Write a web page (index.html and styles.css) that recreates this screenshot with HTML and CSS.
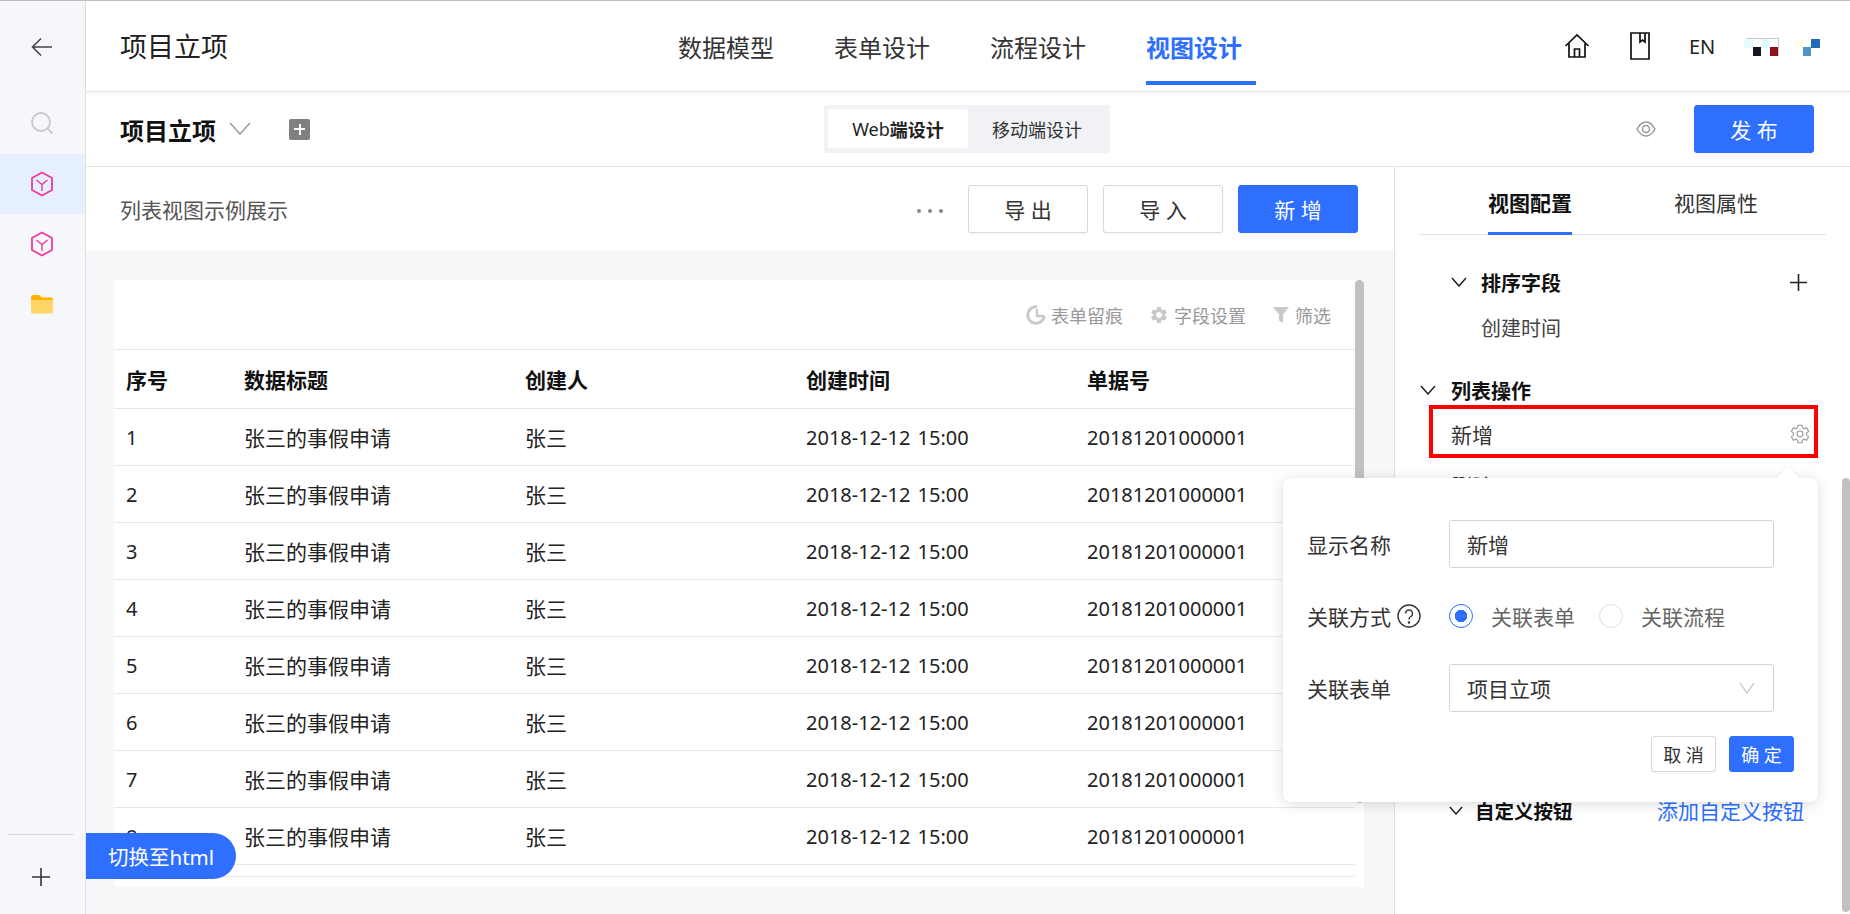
FILE: index.html
```html
<!DOCTYPE html>
<html lang="zh-CN">
<head>
    <meta charset="UTF-8">
    <meta name="viewport" content="width=device-width, initial-scale=1.0">
    <title>项目立项 - 视图设计</title>
    <link rel="stylesheet" href="styles.css">
</head>
<body>
    <aside class="sidebar">
        <a class="side-item back" href="#">
            <svg width="24" height="24" viewBox="0 0 24 24" fill="none" stroke="#444" stroke-width="1.6"><path d="M22 12H2.500M11 3.500 2.500 12l8.500 8.500"/></svg>
        </a>
        <a class="side-item search" href="#">
            <svg width="24" height="24" viewBox="0 0 24 24" fill="none" stroke="#c9c9c9" stroke-width="1.8"><circle cx="11" cy="11" r="9"/><path d="m17.500 17.500 5 5"/></svg>
        </a>
        <a class="side-item active" href="#">
            <svg width="24" height="26" viewBox="0 0 24 26" fill="none" stroke="#ee3a9e" stroke-width="1.8"><path d="M12 1.500 22 7v12l-10 5.500L2 19V7z"/><path d="m6.500 9 5.500 4.500L17.500 9M12 13.500V20" stroke-width="1.4"/></svg>
        </a>
        <a class="side-item" href="#">
            <svg width="24" height="26" viewBox="0 0 24 26" fill="none" stroke="#ee3a9e" stroke-width="1.8"><path d="M12 1.500 22 7v12l-10 5.500L2 19V7z"/><path d="m6.500 9 5.500 4.500L17.500 9M12 13.500V20" stroke-width="1.4"/></svg>
        </a>
        <a class="side-item" href="#">
            <svg width="24" height="20" viewBox="0 0 24 20"><path d="M1 3a2 2 0 0 1 2-2h6l3 2.500h9a2 2 0 0 1 2 2V8H1z" fill="#ffb300"/><path d="M1 6h22v12a1.500 1.500 0 0 1-1.500 1.500h-19A1.500 1.500 0 0 1 1 18z" fill="#ffd666"/></svg>
        </a>
        <div class="side-bottom">
            <svg width="18" height="18" viewBox="0 0 18 18" fill="none" stroke="#333" stroke-width="1.6"><path d="M9 0v18M0 9h18"/></svg>
        </div>
    </aside>

    <div class="main">
        <header class="topbar">
            <div class="app-title">项目立项</div>
            <nav class="steps">
                <a href="#">数据模型</a>
                <a href="#">表单设计</a>
                <a href="#">流程设计</a>
                <a href="#" class="current">视图设计</a>
            </nav>
            <div class="top-tools">
                <svg class="home-icon" width="26" height="26" viewBox="0 0 26 26" fill="none" stroke="#111" stroke-width="1.7"><path d="M1.500 13 13 2l11.500 11M5 10.500V24h16V10.500M10.500 24v-8h5v8"/></svg>
                <svg class="book-icon" width="20" height="28" viewBox="0 0 20 28" fill="none" stroke="#111" stroke-width="1.7"><path d="M1 1h18v26H1zM10 1v9l2.500-2 2.500 2V1"/></svg>
                <span class="lang">EN</span>
                <svg class="mosaic" width="76" height="20" viewBox="0 0 76 20">
                    <rect x="0" y="1" width="9" height="9" fill="#e2fbfb"/>
                    <rect x="18" y="1" width="8" height="9" fill="#e2fbfb"/>
                    <rect x="2" y="0" width="32" height="1" fill="#c8c8c8"/>
                    <rect x="34" y="0" width="1" height="18" fill="#c8c8c8"/>
                    <rect x="9" y="9" width="8" height="9" fill="#14171f"/>
                    <rect x="26" y="9" width="8" height="9" fill="#8e1219"/>
                    <rect x="51" y="1" width="8" height="9" fill="#fffde6"/>
                    <rect x="59" y="9" width="8" height="9" fill="#4f95c6"/>
                    <rect x="67" y="1" width="9" height="9" fill="#2468b8"/>
                </svg>
            </div>
        </header>

        <div class="subbar">
            <div class="view-name">
                <strong>项目立项</strong>
                <svg width="22" height="14" viewBox="0 0 22 14" fill="none" stroke="#8a8f99" stroke-width="1.2"><path d="m1 1 10 11L21 1"/></svg>
                <span class="add-box"></span>
            </div>
            <div class="segment">
                <span class="on">Web<b>端设计</b></span>
                <span>移动端设计</span>
            </div>
            <div class="publish">
                <svg width="20" height="16" viewBox="0 0 20 16" fill="none" stroke="#999" stroke-width="1.5"><path d="M1 8c2.500-4.500 5.500-7 9-7s6.500 2.500 9 7c-2.500 4.500-5.500 7-9 7s-6.500-2.500-9-7z"/><circle cx="10" cy="8" r="3.500"/></svg>
                <button class="btn primary">发 布</button>
            </div>
        </div>

        <div class="workspace">
            <section class="preview">
                <div class="list-head">
                    <span class="list-title">列表视图示例展示</span>
                    <div class="list-actions">
                        <span class="dots"><i></i><i></i><i></i></span>
                        <button class="btn">导 出</button>
                        <button class="btn">导 入</button>
                        <button class="btn primary">新 增</button>
                    </div>
                </div>
                <div class="list-body">
                    <div class="card">
                        <div class="card-inner">
                            <div class="table-tools">
                                <span class="tool">
                                    <svg width="20" height="20" viewBox="0 0 20 20" fill="none" stroke="#c9c9c9"><path d="M11 1.800A8.300 8.300 0 1 0 18.300 11" stroke-width="3"/><path d="M11 4v7h7" stroke-width="2.400"/></svg>
                                    表单留痕
                                </span>
                                <span class="tool">
                                    <svg width="20" height="20" viewBox="0 0 24 24" fill="#c9c9c9"><path d="M19.140 12.940c.04-.3.06-.61.06-.94 0-.32-.02-.64-.07-.94l2.030-1.580c.18-.14.23-.41.12-.61l-1.920-3.320c-.12-.22-.37-.29-.59-.22l-2.390.96c-.5-.38-1.030-.7-1.620-.94l-.36-2.540c-.04-.24-.24-.41-.48-.41h-3.840c-.24 0-.43.17-.47.41l-.36 2.540c-.59.24-1.130.57-1.620.94l-2.390-.96c-.22-.08-.47 0-.59.22L2.740 8.870c-.12.21-.08.47.12.61l2.030 1.580c-.05.3-.09.63-.09.94s.02.64.07.94l-2.030 1.580c-.18.14-.23.41-.12.61l1.920 3.320c.12.22.37.29.59.22l2.390-.96c.5.38 1.030.7 1.620.94l.36 2.540c.05.24.24.41.48.41h3.840c.24 0 .44-.17.47-.41l.36-2.540c.59-.24 1.130-.56 1.620-.94l2.390.96c.22.08.47 0 .59-.22l1.920-3.320c.12-.22.07-.47-.12-.61l-2.010-1.580zM12 15.600c-1.980 0-3.600-1.620-3.600-3.600s1.620-3.600 3.600-3.600 3.600 1.620 3.600 3.600-1.620 3.600-3.600 3.600z"/></svg>
                                    字段设置
                                </span>
                                <span class="tool">
                                    <svg width="18" height="18" viewBox="0 0 18 18" fill="#c9c9c9"><path d="M1 1h16l-6 7.500V17l-4-2.500V8.500z"/></svg>
                                    筛选
                                </span>
                            </div>
                            <table class="data-table">
                                <thead>
                                    <tr><th class="c-no">序号</th><th class="c-title">数据标题</th><th class="c-user">创建人</th><th class="c-time">创建时间</th><th>单据号</th></tr>
                                </thead>
                                <tbody>
                                    <tr><td class="num">1</td><td>张三的事假申请</td><td>张三</td><td class="num date">2018-12-12 15:00</td><td class="num">20181201000001</td></tr>
                                    <tr><td class="num">2</td><td>张三的事假申请</td><td>张三</td><td class="num date">2018-12-12 15:00</td><td class="num">20181201000001</td></tr>
                                    <tr><td class="num">3</td><td>张三的事假申请</td><td>张三</td><td class="num date">2018-12-12 15:00</td><td class="num">20181201000001</td></tr>
                                    <tr><td class="num">4</td><td>张三的事假申请</td><td>张三</td><td class="num date">2018-12-12 15:00</td><td class="num">20181201000001</td></tr>
                                    <tr><td class="num">5</td><td>张三的事假申请</td><td>张三</td><td class="num date">2018-12-12 15:00</td><td class="num">20181201000001</td></tr>
                                    <tr><td class="num">6</td><td>张三的事假申请</td><td>张三</td><td class="num date">2018-12-12 15:00</td><td class="num">20181201000001</td></tr>
                                    <tr><td class="num">7</td><td>张三的事假申请</td><td>张三</td><td class="num date">2018-12-12 15:00</td><td class="num">20181201000001</td></tr>
                                    <tr><td class="num">8</td><td>张三的事假申请</td><td>张三</td><td class="num date">2018-12-12 15:00</td><td class="num">20181201000001</td></tr>
                                    <tr class="tail"><td colspan="5"></td></tr>
                                </tbody>
                            </table>
                        </div>
                        <div class="card-scroll"></div>
                    </div>
                </div>
            </section>

            <aside class="config">
                <div class="config-tabs">
                    <a href="#" class="on">视图配置</a>
                    <a href="#">视图属性</a>
                </div>
                <div class="group sort-group">
                    <div class="group-head">
                        <svg class="chev" width="16" height="10" viewBox="0 0 16 10" fill="none" stroke="#222" stroke-width="1.5"><path d="m1 1 7 8 7-8"/></svg>
                        <strong>排序字段</strong>
                        <svg class="group-add" width="17" height="17" viewBox="0 0 16 16" fill="none" stroke="#222" stroke-width="1.500"><path d="M8 0v16M0 8h16"/></svg>
                    </div>
                    <div class="group-text">创建时间</div>
                </div>
                <div class="group op-group">
                    <div class="group-head">
                        <svg class="chev" width="16" height="10" viewBox="0 0 16 10" fill="none" stroke="#222" stroke-width="1.5"><path d="m1 1 7 8 7-8"/></svg>
                        <strong>列表操作</strong>
                    </div>
                    <div class="op-row picked">
                        <span>新增</span>
                        <svg width="22" height="22" viewBox="0 0 24 24" fill="none" stroke="#999" stroke-width="1.2"><path d="M19.140 12.940c.04-.3.06-.61.06-.94 0-.32-.02-.64-.07-.94l2.030-1.580c.18-.14.23-.41.12-.61l-1.920-3.320c-.12-.22-.37-.29-.59-.22l-2.390.96c-.5-.38-1.030-.7-1.620-.94l-.36-2.540c-.04-.24-.24-.41-.48-.41h-3.840c-.24 0-.43.17-.47.41l-.36 2.540c-.59.24-1.130.57-1.620.94l-2.390-.96c-.22-.08-.47 0-.59.22L2.740 8.870c-.12.21-.08.47.12.61l2.030 1.580c-.05.3-.09.63-.09.94s.02.64.07.94l-2.030 1.580c-.18.14-.23.41-.12.61l1.920 3.320c.12.22.37.29.59.22l2.390-.96c.5.38 1.030.7 1.620.94l.36 2.540c.05.24.24.41.48.41h3.840c.24 0 .44-.17.47-.41l.36-2.540c.59-.24 1.130-.56 1.620-.94l2.390.96c.22.08.47 0 .59-.22l1.920-3.320c.12-.22.07-.47-.12-.61l-2.010-1.580z"/><circle cx="12" cy="12" r="3.200"/></svg>
                    </div>
                    <div class="op-row">
                        <span>删除</span>
                    </div>
                </div>
                <div class="group custom-group">
                    <div class="group-head">
                        <svg class="chev" width="14" height="9" viewBox="0 0 16 10" fill="none" stroke="#222" stroke-width="1.6"><path d="m1 1 7 8 7-8"/></svg>
                        <strong>自定义按钮</strong>
                        <a href="#" class="add-link">添加自定义按钮</a>
                    </div>
                </div>
                <div class="config-scroll"></div>

                <div class="popover">
                    <div class="pop-row">
                        <label>显示名称</label>
                        <div class="field">新增</div>
                    </div>
                    <div class="pop-row">
                        <label>关联方式
                            <svg width="24" height="24" viewBox="0 0 24 24" fill="none" stroke="#333" stroke-width="1.400"><circle cx="12" cy="12" r="11"/><path d="M8.500 9.500a3.500 3.500 0 1 1 5.300 3c-1.300.8-1.800 1.500-1.800 3"/><circle cx="12" cy="18.500" r=".6" fill="#333"/></svg>
                        </label>
                        <div class="radios">
                            <span class="radio checked"><i></i>关联表单</span>
                            <span class="radio"><i></i>关联流程</span>
                        </div>
                    </div>
                    <div class="pop-row">
                        <label>关联表单</label>
                        <div class="field select">
                            项目立项
                            <svg width="16" height="12" viewBox="0 0 16 12" fill="none" stroke="#c4c4c4" stroke-width="1.300"><path d="m1 1 7 10 7-10"/></svg>
                        </div>
                    </div>
                    <div class="pop-actions">
                        <button class="btn small">取 消</button>
                        <button class="btn small primary">确 定</button>
                    </div>
                </div>
            </aside>
        </div>
    </div>

    <button class="switch-html">切换至html</button>
</body>
</html>
```

FILE: styles.css
```css
* {
    box-sizing: border-box;
}
html, body {
    height: 100%;
}
body {
    margin: 0;
    display: flex;
    height: 914px;
    overflow: hidden;
    border-top: 1px solid #bdbdbd;
    font-family: "Noto Sans", "Noto Sans CJK SC", sans-serif;
    font-size: 21px;
    color: #222;
    background-color: #fff;
}
a {
    color: inherit;
    text-decoration: none;
}
button {
    font-family: inherit;
}

/* left rail */
.sidebar {
    width: 86px;
    flex: none;
    display: flex;
    flex-direction: column;
    background-color: #f6f7fa;
    border-right: 1px solid #e0e0e0;
    position: relative;
}
.side-item {
    height: 60px;
    display: flex;
    align-items: center;
    justify-content: center;
    padding-right: 1px;
}
.side-item.back {
    height: 91px;
}
.side-item.search {
    height: 62px;
}
.side-item.active {
    background-color: #e6efff;
}
.side-bottom {
    margin: auto 11px 0 8px;
    height: 80px;
    border-top: 1px solid #d9d9d9;
    display: flex;
    align-items: center;
    justify-content: center;
    padding-top: 4px;
}

.main {
    flex: 1;
    min-width: 0;
    display: flex;
    flex-direction: column;
}

/* top bar */
.topbar {
    height: 91px;
    flex: none;
    display: flex;
    align-items: center;
    padding-left: 34px;
    border-bottom: 1px solid #e4e4e4;
    box-shadow: 0 2px 6px rgba(0,0,0,0.05);
    position: relative;
}
.app-title {
    font-size: 27px;
    line-height: 40px;
    padding-top: 2px;
    width: 558px;
    flex: none;
    color: #222;
}
.steps {
    display: flex;
    gap: 60px;
    height: 100%;
    font-size: 24px;
}
.steps a {
    display: flex;
    align-items: center;
    position: relative;
    width: 96px;
    color: #333;
}
.steps .current {
    color: #2e6fff;
    font-weight: bold;
}
.steps .current::after {
    content: "";
    position: absolute;
    left: 0;
    bottom: 6px;
    width: 110px;
    height: 4px;
    background-color: #2e6fff;
}
.top-tools {
    margin-left: auto;
    display: flex;
    align-items: center;
    padding-right: 30px;
}
.book-icon {
    margin-left: 40px;
}
.lang {
    margin-left: 39px;
    font-size: 20px;
    width: 26px;
}
.mosaic {
    margin-left: 29px;
    margin-top: 4px;
}

/* view name bar */
.subbar {
    height: 75px;
    flex: none;
    display: flex;
    align-items: center;
    padding: 0 36px 0 34px;
    border-bottom: 1px solid #e4e4e4;
}
.view-name {
    width: 704px;
    flex: none;
    display: flex;
    align-items: center;
}
.view-name strong {
    font-size: 24px;
    color: #111;
}
.view-name svg {
    margin-left: 13px;
}
.add-box {
    width: 21px;
    height: 21px;
    margin-left: 38px;
    border-radius: 2px;
    background-color: #808080;
    position: relative;
}
.add-box::before, .add-box::after {
    content: "";
    position: absolute;
    background-color: #fff;
}
.add-box::before {
    left: 5px;
    top: 9.500px;
    width: 11px;
    height: 2px;
}
.add-box::after {
    left: 9.500px;
    top: 5px;
    width: 2px;
    height: 11px;
}
.segment {
    width: 286px;
    height: 48px;
    flex: none;
    display: flex;
    padding: 4px;
    border-radius: 3px;
    background-color: #f0f2f5;
    font-size: 18px;
    color: #333;
}
.segment span {
    flex: 1;
    display: flex;
    align-items: center;
    justify-content: center;
}
.segment .on {
    flex: none;
    width: 140px;
    height: 39px;
    background-color: #fff;
    color: #222;
}
.publish {
    margin-left: auto;
    display: flex;
    align-items: center;
    gap: 38px;
}
.btn {
    width: 120px;
    height: 48px;
    padding: 0;
    background-color: #fff;
    border: 1px solid #d9d9d9;
    border-radius: 3px;
    font-size: 21px;
    color: #333;
    box-shadow: 0 2px 2px rgba(0,0,0,0.03);
}
.btn.primary {
    background-color: #2e6fff;
    border-color: #2e6fff;
    color: #fff;
}
.btn.small {
    width: 65px;
    height: 36px;
    font-size: 18px;
}

.workspace {
    flex: 1;
    min-height: 0;
    display: flex;
}

/* list preview */
.preview {
    flex: 1;
    min-width: 0;
    display: flex;
    flex-direction: column;
    background-color: #f6f7f9;
}
.list-head {
    height: 83px;
    flex: none;
    display: flex;
    align-items: center;
    padding: 0 36px 0 34px;
    background-color: #fff;
}
.list-title {
    color: #555;
}
.list-actions {
    margin-left: auto;
    display: flex;
    align-items: center;
    gap: 15px;
}
.dots {
    display: flex;
    gap: 7px;
    margin-right: 10px;
    margin-top: 4px;
}
.dots i {
    width: 4px;
    height: 4px;
    border-radius: 50%;
    background-color: #888;
}
.list-body {
    flex: 1;
    padding: 30px 30px 27px 28px;
    min-height: 0;
}
.card {
    display: flex;
    height: 607px;
    background-color: #fff;
}
.card-inner {
    flex: 1;
    min-width: 0;
}
.card-scroll {
    width: 9px;
    height: 523px;
    flex: none;
    border-radius: 5px;
    background-color: #c1c1c1;
}
.table-tools {
    height: 69px;
    display: flex;
    align-items: center;
    justify-content: flex-end;
    gap: 26px;
    padding-right: 24px;
    font-size: 18px;
    color: #999;
}
.tool {
    display: flex;
    align-items: center;
    gap: 5px;
}
.data-table {
    width: 100%;
    table-layout: fixed;
    border-collapse: collapse;
}
.data-table th, .data-table td {
    height: 57px;
    padding: 2px 0 0 12px;
    text-align: left;
    border-top: 1px solid #e8e8e8;
    font-size: 21px;
    line-height: 28px;
    font-weight: normal;
    color: #222;
}
.data-table th {
    height: 59px;
    font-weight: bold;
    color: #111;
}
.data-table .num {
    font-size: 20px;
}
.data-table .date {
    word-spacing: 2px;
}
.data-table .tail td {
    height: 12px;
    padding: 0;
    line-height: 0;
    border-bottom: 1px solid #e8e8e8;
}
.c-no {
    width: 118px;
}
.c-title, .c-user, .c-time {
    width: 281px;
}

/* right config panel */
.config {
    width: 456px;
    flex: none;
    border-left: 1px solid #e0e0e0;
    background-color: #fff;
    position: relative;
}
.config-tabs {
    margin: 0 24px;
    height: 68px;
    display: flex;
    border-bottom: 1px solid #e4e4e4;
    padding-left: 69px;
    gap: 102px;
}
.config-tabs a {
    width: 84px;
    height: 68px;
    line-height: 72px;
    white-space: nowrap;
    color: #333;
}
.config-tabs .on {
    font-weight: bold;
    color: #111;
    border-bottom: 3px solid #2e6fff;
}
.group-head {
    display: flex;
    align-items: center;
    height: 30px;
}
.group-head strong {
    font-size: 20px;
    color: #111;
}
.chev {
    flex: none;
}
.sort-group {
    padding: 32px 48px 0 56px;
}
.sort-group .chev {
    margin-right: 14px;
}
.group-add {
    margin-left: auto;
    margin-right: -5px;
}
.group-text {
    margin: 17px 0 0 30px;
    line-height: 30px;
    font-size: 20px;
    color: #444;
}
.op-group {
    padding: 31px 32px 0 34px;
}
.op-group .group-head {
    height: 30px;
    margin-left: -1px;
}
.op-group .group-head .chev {
    margin-left: -8px;
    margin-right: 15px;
}
.op-row {
    height: 53px;
    display: flex;
    align-items: center;
    justify-content: space-between;
    padding: 0 4px 0 22px;
    font-size: 21px;
    color: #333;
}
.op-row.picked {
    border: 4px solid #f00;
    padding: 5px 3px 0 18px;
}
.custom-group {
    padding: 284px 46px 0 53px;
}
.custom-group .chev {
    margin-right: 12px;
    margin-left: 1px;
}
.custom-group strong {
    font-size: 19.500px;
}
.add-link {
    margin-left: auto;
    font-size: 21px;
    color: #2e6fff;
}
.config-scroll {
    position: absolute;
    right: 0;
    top: 311px;
    width: 8px;
    height: 434px;
    border-radius: 4px;
    background-color: #c1c1c1;
}

/* popover over the panel */
.popover {
    position: absolute;
    left: -112px;
    top: 311px;
    width: 535px;
    height: 324px;
    padding: 42px 44px 0 24px;
    background-color: #fff;
    border-radius: 8px;
    box-shadow: 0 2px 14px rgba(0,0,0,0.14);
}
.popover::before {
    content: "";
    position: absolute;
    right: 22px;
    top: -8px;
    width: 16px;
    height: 16px;
    background-color: #fff;
    transform: rotate(45deg);
    box-shadow: -2px -2px 4px rgba(0,0,0,0.03);
}
.pop-row {
    display: flex;
    align-items: center;
    height: 48px;
    margin-bottom: 24px;
    position: relative;
}
.pop-row label {
    width: 142px;
    flex: none;
    display: flex;
    align-items: center;
    gap: 6px;
    font-size: 21px;
    color: #333;
}
.field {
    flex: 1;
    height: 48px;
    display: flex;
    align-items: center;
    justify-content: space-between;
    padding: 0 18px 0 17px;
    border: 1px solid #d4d4d4;
    border-radius: 3px;
    font-size: 21px;
    color: #333;
}
.radios {
    display: flex;
    gap: 24px;
    font-size: 21px;
    color: #666;
}
.radio {
    display: flex;
    align-items: center;
    gap: 18px;
}
.radio i {
    width: 24px;
    height: 24px;
    border-radius: 50%;
    border: 1px solid #ddd;
}
.radio.checked i {
    border-color: #2e6fff;
    background: radial-gradient(circle, #2e6fff 0 6px, #fff 6.500px);
}
.pop-actions {
    display: flex;
    justify-content: flex-end;
    gap: 13px;
    margin-right: -20px;
}
.switch-html {
    position: absolute;
    left: 86px;
    top: 833px;
    width: 150px;
    height: 46px;
    padding: 0 0 0 22px;
    text-align: left;
    border: none;
    border-radius: 0 23px 23px 0;
    background-color: #2e6fff;
    color: #fff;
    font-size: 20.500px;
}
```
